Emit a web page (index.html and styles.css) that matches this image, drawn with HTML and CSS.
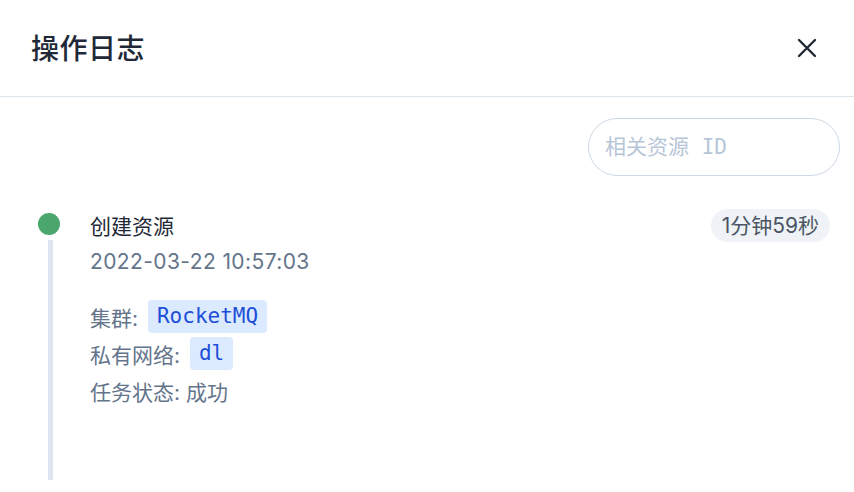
FILE: index.html
```html
<!DOCTYPE html>
<html lang="zh">
<head>
<meta charset="utf-8">
<title>操作日志</title>
<link rel="stylesheet" href="styles.css">
</head>
<body>
<div class="drawer">
  <header class="head">
    <h1 class="head-title">操作日志</h1>
    <button class="close" aria-label="关闭">
      <svg width="20" height="20" viewBox="0 0 20 20"><path d="M2 2 L18 18 M18 2 L2 18" stroke="#1f2937" stroke-width="2.4" stroke-linecap="round" fill="none"/></svg>
    </button>
  </header>
  <div class="body">
    <div class="search-row">
      <input class="search" type="text" placeholder="相关资源 ID">
    </div>
    <div class="timeline">
      <div class="item">
        <div class="rail">
          <span class="dot"></span>
          <span class="line"></span>
        </div>
        <div class="content">
          <div class="item-head">
            <div class="item-title">创建资源</div>
            <span class="elapsed">1分钟59秒</span>
          </div>
          <div class="item-time">2022-03-22 10:57:03</div>
          <div class="details">
            <div class="row">集群: <span class="tag">RocketMQ</span></div>
            <div class="row">私有网络: <span class="tag">dl</span></div>
            <div class="row">任务状态: 成功</div>
          </div>
        </div>
      </div>
    </div>
  </div>
</div>
</body>
</html>
```
FILE: styles.css
```css
* { box-sizing: border-box; }
html, body { margin: 0; padding: 0; background: #fff; }
body {
  font-family: "Inter", "Noto Sans CJK SC", sans-serif;
  color: #1f2937;
  width: 854px;
  height: 492px;
  overflow: hidden;
}
.head {
  height: 97px;
  display: flex;
  align-items: center;
  justify-content: space-between;
  padding: 0 37px 0 31px;
  border-bottom: 1px solid #dde5ec;
}
.head-title {
  margin: 0;
  font-size: 28px;
  font-weight: 500;
  color: #1f2937;
  letter-spacing: 0.5px;
  padding-bottom: 2px;
}
.close {
  border: 0;
  background: none;
  padding: 0;
  width: 20px;
  height: 20px;
  cursor: pointer;
  display: flex;
}
.body {
  padding: 21px 14px 0 38px;
}
.search-row {
  display: flex;
  justify-content: flex-end;
}
.search {
  width: 252px;
  height: 58px;
  border: 1px solid #cdd8e4;
  border-radius: 29px;
  padding: 0 16px;
  font-family: "DejaVu Sans Mono", "Noto Sans CJK SC", monospace;
  font-size: 21px;
  outline: none;
}
.search::placeholder {
  color: #b7c6d7;
}
.timeline { margin-top: 33px; }
.item { display: flex; padding-right: 10px; }
.rail {
  width: 52px;
  flex: none;
  display: flex;
  flex-direction: column;
  align-items: flex-start;
  padding-top: 4px;
}
.dot {
  width: 22px;
  height: 22px;
  border-radius: 50%;
  background: #4ba66d;
}
.line {
  width: 5px;
  height: 240px;
  margin-top: 5px;
  margin-left: 10px;
  background: #dce5ee;
}
.content { flex: 1; }
.item-head {
  display: flex;
  justify-content: space-between;
  align-items: flex-start;
}
.item-title {
  font-size: 21px;
  line-height: 30px;
  margin-top: 3px;
  color: #1f2937;
}
.elapsed {
  background: #eff3f7;
  border-radius: 17px;
  height: 33px;
  line-height: 33px;
  padding: 0 11px;
  font-size: 21px;
  color: #4b5563;
}
.item-time {
  font-size: 21px;
  line-height: 30px;
  margin-top: 5px;
  color: #64748b;
  letter-spacing: 0.4px;
}
.details {
  margin-top: 21px;
  font-size: 21px;
  color: #64748b;
}
.row {
  height: 37px;
  display: flex;
  align-items: center;
  white-space: pre;
}
.tag {
  display: inline-block;
  margin-left: 4px;
  background: #dbeafe;
  color: #1d4ed8;
  border-radius: 4px;
  height: 33px;
  line-height: 33px;
  padding: 0 9px;
  font-family: "DejaVu Sans Mono", monospace;
  font-size: 21px;
}
```
